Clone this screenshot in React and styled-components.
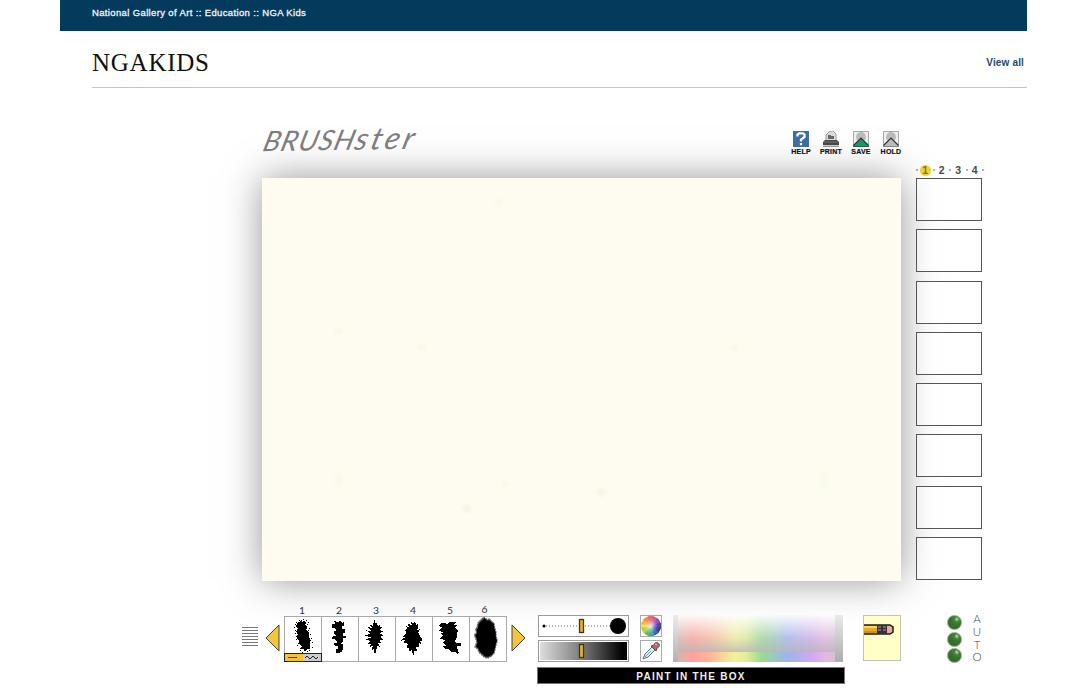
import React from "react";
import styled, { createGlobalStyle } from "styled-components";

const Global = createGlobalStyle`
  *{box-sizing:border-box}
  body{margin:0;background:#fff;font-family:"Liberation Sans",Arial,sans-serif;overflow:hidden}
  svg{display:block}
`;

const Page = styled.div`width:1080px;height:689px;overflow:hidden;background:#fff;`;
const TopBar = styled.header`
  margin-left:60px;width:967px;height:31px;padding:6px 0 0 32px;background:#043a5c;color:#f2f7fa;
  font-size:9.5px;line-height:13px;white-space:nowrap;-webkit-text-stroke:.3px #f2f7fa;letter-spacing:.36px;
`;
const TitleRow = styled.div`
  margin-left:92px;width:935px;height:57px;border-bottom:1px solid #c4c4c6;
  display:flex;justify-content:space-between;align-items:center;padding:7px 3px 0 0;
`;
const Title = styled.h1`
  margin:0;font:400 25px/30px "Liberation Serif",serif;letter-spacing:.75px;color:#111;white-space:nowrap;
`;
const ViewAll = styled.a`font-size:10px;font-weight:700;color:#1d4a68;letter-spacing:.15px;line-height:12px;`;

const Studio = styled.main`margin-left:262px;width:722px;display:grid;grid-template-columns:639px 68px;column-gap:15px;`;
const CanvasHead = styled.div`
  grid-column:1;height:90px;display:flex;justify-content:space-between;align-items:flex-start;position:relative;z-index:1;
`;
const Logo = styled.div`
  margin-top:35px;padding-left:3px;display:flex;align-items:baseline;color:#7e7e7e;height:30px;
  font:italic 400 25px/30px Lato,sans-serif;transform:skewX(-16deg) rotate(-1deg);
`;
const Letters = styled.span`
  font-size:${p => p.$size}px;letter-spacing:${p => p.$gap}px;
`;
const Actions = styled.div`display:flex;margin:43px -5px 0 0;`;
const Action = styled.button`
  width:30px;padding:0;border:0;background:none;display:flex;flex-direction:column;align-items:center;gap:1px;
  font:700 7px/8px "Liberation Sans",sans-serif;color:#111;letter-spacing:.25px;-webkit-text-stroke:.2px #111;
`;
const Canvas = styled.div`
  grid-column:1;height:403px;box-shadow:0 0 36px -1px rgba(60,52,60,.55);
  background:radial-gradient(circle at 38% 76%,#fafaea 0 2px,transparent 5px),
    radial-gradient(circle at 32% 82%,#f5f5e4 0 2px,transparent 6px),
    radial-gradient(circle at 25% 42%,#f9f9ea 0 2px,transparent 6px),
    radial-gradient(circle at 37% 6%,#f9f9ec 0 2px,transparent 6px),
    radial-gradient(circle at 53% 78%,#f6f6e6 0 2px,transparent 7px),
    radial-gradient(circle at 12% 38%,#f9f9ea 0 2px,transparent 6px),
    radial-gradient(circle at 74% 42%,#f9f9ea 0 2px,transparent 6px),
    radial-gradient(ellipse 7px 14px at 12% 75%,#f9faec 0 2px,transparent 100%),
    radial-gradient(ellipse 7px 14px at 88% 75%,#f9faec 0 2px,transparent 100%),#fefcf0;
`;
const Side = styled.aside`grid-column:2;grid-row:1 / 3;display:flex;flex-direction:column;padding-top:75px;position:relative;z-index:1;`;
const Pager = styled.div`
  height:14px;width:68px;display:flex;align-items:center;justify-content:space-between;
  font:700 10.5px/14px "Liberation Sans",sans-serif;color:#4a4a4a;
`;
const Dot = styled.i`width:2px;height:2px;border-radius:1px;background:#999;`;
const PageNo = styled.span`
  width:11px;height:11px;line-height:11px;text-align:center;border-radius:50%;
  background:${p => p.$active ? "#eed136" : "transparent"};color:${p => p.$active ? "#8c7210" : "#4a4a4a"};
`;
const Thumbs = styled.div`height:402px;width:66px;margin-top:1px;display:flex;flex-direction:column;justify-content:space-between;`;
const Thumb = styled.div`height:43px;border:1px solid #58555a;background:linear-gradient(90deg,rgba(255,255,255,.3),#fff 60%);`;

const Tools = styled.footer`
  margin-left:242px;width:742px;height:108px;padding-top:23px;display:flex;align-items:flex-start;position:relative;z-index:1;
`;
const LinesWrap = styled.div`margin-top:23px;width:16px;height:21px;background:repeating-linear-gradient(#777 0 1px,transparent 1px 3px);`;
const ArrowWrap = styled.div`margin:20px 0 0 ${p => p.$left}px;`;
const Brushes = styled.div`margin-left:4px;display:grid;grid-template-columns:repeat(6,37px);width:223px;`;
const BrushCol = styled.div`display:flex;flex-direction:column;`;
const BrushNo = styled.span`
  height:12px;font:9px/13px Lato,sans-serif;color:#333;text-align:center;
  transform:translate(${p => p.$shift}px,${p => p.$rise}px) scaleX(1.15);
`;
const BrushCell = styled.div`
  height:46px;background:#fff;border:1px solid #aaa;border-right-width:${p => p.$last ? 1 : 0}px;
  width:${p => p.$last ? 38 : 37}px;position:relative;
`;
const StrokeMode = styled.div`
  position:absolute;left:-1px;bottom:-1px;width:38px;height:9px;border:1px solid #222;background:linear-gradient(90deg,#f3c337 50%,#ccc 50%);z-index:2;
`;
const Mixer = styled.section`margin:11px 0 0 11px;width:308px;`;
const MixerTop = styled.div`display:grid;grid-template-columns:91px 22px 170px;column-gap:11px;height:47px;margin-left:1px;`;
const Stack = styled.div`display:flex;flex-direction:column;justify-content:space-between;height:47px;`;
const Slider = styled.div`height:22px;border:1px solid #999;padding:1px;background:#fff;`;
const Tool = styled.div`width:22px;height:22px;border:1px solid #aaa;background:#fff;`;
const Spectrum = styled.div`
  height:47px;padding:0 8px 0 5px;display:grid;grid-template-rows:37px 10px;
  background:linear-gradient(rgba(255,255,255,.75),transparent),linear-gradient(90deg,#b2b2b2 0 5px,#c4c4c4 5px 162px,#acacac 162px);
`;
const Hues = styled.div`
  background:${p => p.$soft ? "linear-gradient(rgba(255,255,255,.92),rgba(225,225,225,.3) 62%,rgba(184,184,184,.8))," : ""}
  linear-gradient(90deg,#d8b5b0 0,#ffa09b 9%,#ffb49d 20%,#f4f19a 36%,#e6ee98 43%,#98dc91 53%,#a0b3f2 70%,#d2a9ee 86%,#e6b6e5 94%,#d5c0d2 100%);
`;
const Message = styled.div`
  height:17px;margin-top:5px;background:#000;border:1px solid #777;color:#eee;text-align:center;font-size:10px;font-weight:700;line-height:17px;letter-spacing:1.25px;
`;
const Eraser = styled.div`margin:11px 0 0 18px;width:38px;height:46px;background:#ffffc8;border:1px solid #c3c3b6;padding-top:8px;`;
const Auto = styled.div`margin:11px 0 0 46px;display:flex;gap:9px;`;
const Leds = styled.div`display:flex;flex-direction:column;gap:1.5px;`;
const Led = styled.span`
  width:15px;height:15px;border-radius:50%;border:1px solid #8fa588;
  background:radial-gradient(circle at 68% 25%,#a9cd9a 0 .5px,#418a35 2.5px,#3a762e 5px,#376c2b 8px);
`;
const AutoText = styled.div`
  display:flex;flex-direction:column;align-items:center;width:12px;margin-top:-2px;font:300 11.5px/12.8px Lato,sans-serif;color:#444;
`;

const brushShapes = [
  "48,64 52,60 55,66 61,63 65,67 64,76 70,78 67,90 74,98 75,111 80,121 77,133 79,145 68,149 63,154 58,147 52,148 53,137 46,132 46,122 38,114 41,102 36,94 42,86 36,78 40,70",
  "40,62 46,62 46,67 60,63 63,69 69,66 70,76 63,80 64,86 72,86 72,99 66,101 67,107 74,107 74,114 65,115 65,124 60,130 66,134 65,149 60,157 46,159 44,148 52,146 50,137 41,137 40,129 48,128 45,119 33,116 36,109 46,106 39,101 39,94 45,94 43,86 32,83 32,73 42,72",
  "47,61 51,61 53,73 58,67 59,80 67,73 66,81 72,81 66,90 76,94 66,100 78,108 67,110 75,119 64,119 70,131 60,128 66,141 57,138 57,147 54,147 54,159 49,159 48,144 42,150 44,137 34,142 41,131 26,134 38,123 23,119 40,112 20,107 38,100 24,91 41,93 26,80 44,85 34,72 46,78",
  "47,63 54,71 61,63 62,76 68,71 70,82 66,90 74,88 70,98 75,108 84,121 76,122 77,131 71,129 72,141 63,140 66,153 57,153 57,165 53,165 52,149 41,155 43,145 36,143 38,131 27,127 29,120 17,122 30,112 24,109 35,100 29,90 38,87 32,78 42,83 38,70 50,75",
  "29,68 40,69 45,73 52,66 72,66 67,74 77,77 70,82 75,89 80,92 74,99 77,108 72,118 69,124 73,129 88,130 88,137 75,138 77,149 80,158 76,164 70,155 58,157 51,147 40,148 32,139 42,137 33,129 38,121 24,115 34,107 26,101 34,97 20,91 30,83 20,77",
  "38,57 45,51 54,59 61,57 69,65 75,69 77,84 81,96 81,109 85,123 82,131 78,148 75,160 68,168 57,174 48,173 41,167 30,157 26,147 18,141 23,127 20,115 16,105 22,98 20,88 24,82 27,68"
];
const speckRows = ["45,59 58,57 65,61 72,66", "36,67 70,72 33,73", "31,82 75,84 34,90", "73,91 32,98 78,103", "35,107 80,113 36,118", "83,126 42,128 39,134", "48,143 83,140 47,150", "54,156 60,159 70,154 76,151"];
const Specks = () => <g>{speckRows.flatMap(r => r.split(" ")).map(p => {
  const [x, y] = p.split(",");
  return <rect key={p} x={x} y={y} width="3" height="3" />;
})}</g>;
function Brush({ index }) {
  return <svg width="36" height="45" viewBox="3 51 108 135" shapeRendering={index === 5 ? "auto" : "crispEdges"}>
    {index === 5 && <polygon points={brushShapes[5]} fill="#555" stroke="#666" strokeWidth="4" strokeDasharray="5 3" />}
    <polygon points={brushShapes[index]} fill="#000" transform={index === 5 ? "translate(4 7) scale(.94)" : undefined} />
    {index === 0 && <Specks />}
  </svg>;
}
const Arrow = ({ right }) => <svg width="15" height="28" viewBox="0 0 15 28"><path d={right ? "M1 1V27L14 14Z" : "M14 1V27L1 14Z"} fill="#f4c43c" stroke="#444" /></svg>;
const Handle = () => <rect x="39.5" y="2.5" width="4" height="13" fill="#e5b62b" stroke="#3c321e" strokeWidth="1.3" />;
function HelpIcon() {
  return <svg width="16" height="16" viewBox="0 0 16 16"><path fill="#3d6da2" d="M0 0h16v16H0z" /><path d="M4.5 5.5V3.5L6 2.3h4l1.5 1.2V6L8 8.5v2M8 12v2.2" fill="none" stroke="#fff" strokeWidth="2.3" /></svg>;
}
function PrintIcon() {
  return <svg width="18" height="16" viewBox="0 0 18 16"><path d="M4 9V4l4-4h3l3 3v6" fill="#ddd" stroke="#999" /><path d="M6 8V4h3v1h3v3z" fill="#666" /><path d="M3 9h12l2 2v3H1v-3z" fill="#484848" /><path d="M2 11h14" stroke="#777" /><path d="M1 15.2h16" stroke="#666" /></svg>;
}
function PictureIcon({ green }) {
  return <svg width="16" height="16" viewBox="0 0 16 16"><path d="M.5.5h15v15H.5z" fill="#eee" stroke="#aaa" /><circle cx="8" cy="6" r="5" fill="#bbb" /><path d="M0 15l8-8 8 8v1H0z" fill={green ? "#219464" : "#bbb"} /><path d="M.5 14.5L8 7l7.5 7.5" fill="none" stroke="#333" strokeWidth="1.2" /><path d="M0 15.5h16" stroke={green ? "#176a48" : "#888"} /></svg>;
}
const wheelColors = ["#f0df48", "#f4b33c", "#f08440", "#e8606a", "#c9509c", "#8a46ae", "#4a339c", "#26309a", "#2c5eb0", "#38a0a4", "#5cb45c", "#b4cc40"];
function ColorWheel() {
  return <svg width="20" height="20" viewBox="-10 -10 20 20">
    <defs><radialGradient id="wheelLight"><stop offset="0" stopColor="#fff" stopOpacity=".8" /><stop offset=".6" stopColor="#fff" stopOpacity=".15" /><stop offset="1" stopColor="#fff" stopOpacity="0" /></radialGradient></defs>
    {wheelColors.map((c, i) => <path key={c} d="M0 0L0-10A10 10 0 0 1 6.43-7.66Z" fill={c} transform={`rotate(${i * 30 - 110})`} />)}
    <circle r="10" fill="url(#wheelLight)" />
  </svg>;
}
function Dropper() {
  return <svg width="20" height="20" viewBox="0 0 20 20"><path d="M2 18l2-5 7-7 3 3-7 7z" fill="#d7edf3" stroke="#556f7b" /><path d="M4 16l6-6" stroke="#6ba8c5" /><path d="M10 5l5 5 1-3c3-1 3-4 1-5s-4 0-4 2z" fill="#ad696b" stroke="#71464d" /><path d="M14 3l2 1" stroke="#ecc" /></svg>;
}
function Pencil() {
  return <svg width="30" height="11" viewBox="0 0 30 11"><path d="M0 1h26l3 2v5l-3 2H0" fill="#e8ac20" stroke="#211b1e" strokeWidth="1.5" /><path d="M0 3h13" stroke="#f9d766" strokeWidth="2" /><path d="M0 8h13" stroke="#b77613" /><path d="M13 1h10v9H13z" fill="#343036" /><path d="M14 3h3m2 0h3M14 6h3m2 0h3" stroke="#a7a4ae" /><path d="M23 2h3l2 2v3l-2 2h-3z" fill="#eaa7aa" /></svg>;
}

export default function App() {
  return <Page><Global />
    <TopBar>National Gallery of Art :: Education :: NGA Kids</TopBar>
    <TitleRow><Title>NGAKIDS</Title><ViewAll>View all</ViewAll></TitleRow>
    <Studio>
      <CanvasHead>
        <Logo><Letters $size={28} $gap={1}>BRUSH</Letters><Letters $size={31} $gap={3.2}>ster</Letters></Logo>
        <Actions>
          <Action><HelpIcon />HELP</Action>
          <Action><PrintIcon />PRINT</Action>
          <Action><PictureIcon green />SAVE</Action>
          <Action><PictureIcon />HOLD</Action>
        </Actions>
      </CanvasHead>
      <Canvas />
      <Side><Pager><Dot /><PageNo $active>1</PageNo><Dot /><PageNo>2</PageNo><Dot /><PageNo>3</PageNo><Dot /><PageNo>4</PageNo><Dot /></Pager>
        <Thumbs>{Array.from({ length: 8 }, (_, i) => <Thumb key={i} />)}</Thumbs></Side>
    </Studio>
    <Tools>
      <LinesWrap /><ArrowWrap $left={7}><Arrow /></ArrowWrap>
      <Brushes>{[1, 2, 3, 4, 5, 6].map((n, i) => <BrushCol key={n}><BrushNo $rise={n === 6 ? -1 : 0} $shift={n === 6 ? -3 : -.5}>{n}</BrushNo><BrushCell $last={n === 6}><Brush index={i} />{n === 1 && <StrokeMode><svg width="36" height="7" viewBox="0 0 36 7"><path d="M3 3.5h9" stroke="#513b18" /><path d="M20 4l2-2 3 3 3-3 3 3 2-2" fill="none" stroke="#222" /></svg></StrokeMode>}</BrushCell></BrushCol>)}</Brushes>
      <ArrowWrap $left={4}><Arrow right /></ArrowWrap>
      <Mixer>
        <MixerTop>
          <Stack>
            <Slider><svg width="87" height="18" viewBox="0 0 87 18"><circle cx="4" cy="9" r="1.5" /><path d="M6 9h64" stroke="#666" strokeDasharray="1 2" /><circle cx="78" cy="9" r="8" /><Handle /></svg></Slider>
            <Slider><svg width="87" height="18" viewBox="0 0 87 18"><defs><linearGradient id="shade"><stop stopColor="#ddd" /><stop offset=".5" stopColor="#777" /><stop offset=".95" stopColor="#000" /></linearGradient></defs><path fill="url(#shade)" d="M0 0h87v18H0z" /><Handle /></svg></Slider>
          </Stack>
          <Stack><Tool><ColorWheel /></Tool><Tool><Dropper /></Tool></Stack>
          <Spectrum><Hues $soft /><Hues /></Spectrum>
        </MixerTop>
        <Message>PAINT IN THE BOX</Message>
      </Mixer>
      <Eraser><Pencil /></Eraser>
      <Auto><Leds><Led /><Led /><Led /></Leds><AutoText><span>A</span><span>U</span><span>T</span><span>O</span></AutoText></Auto>
    </Tools>
  </Page>;
}
